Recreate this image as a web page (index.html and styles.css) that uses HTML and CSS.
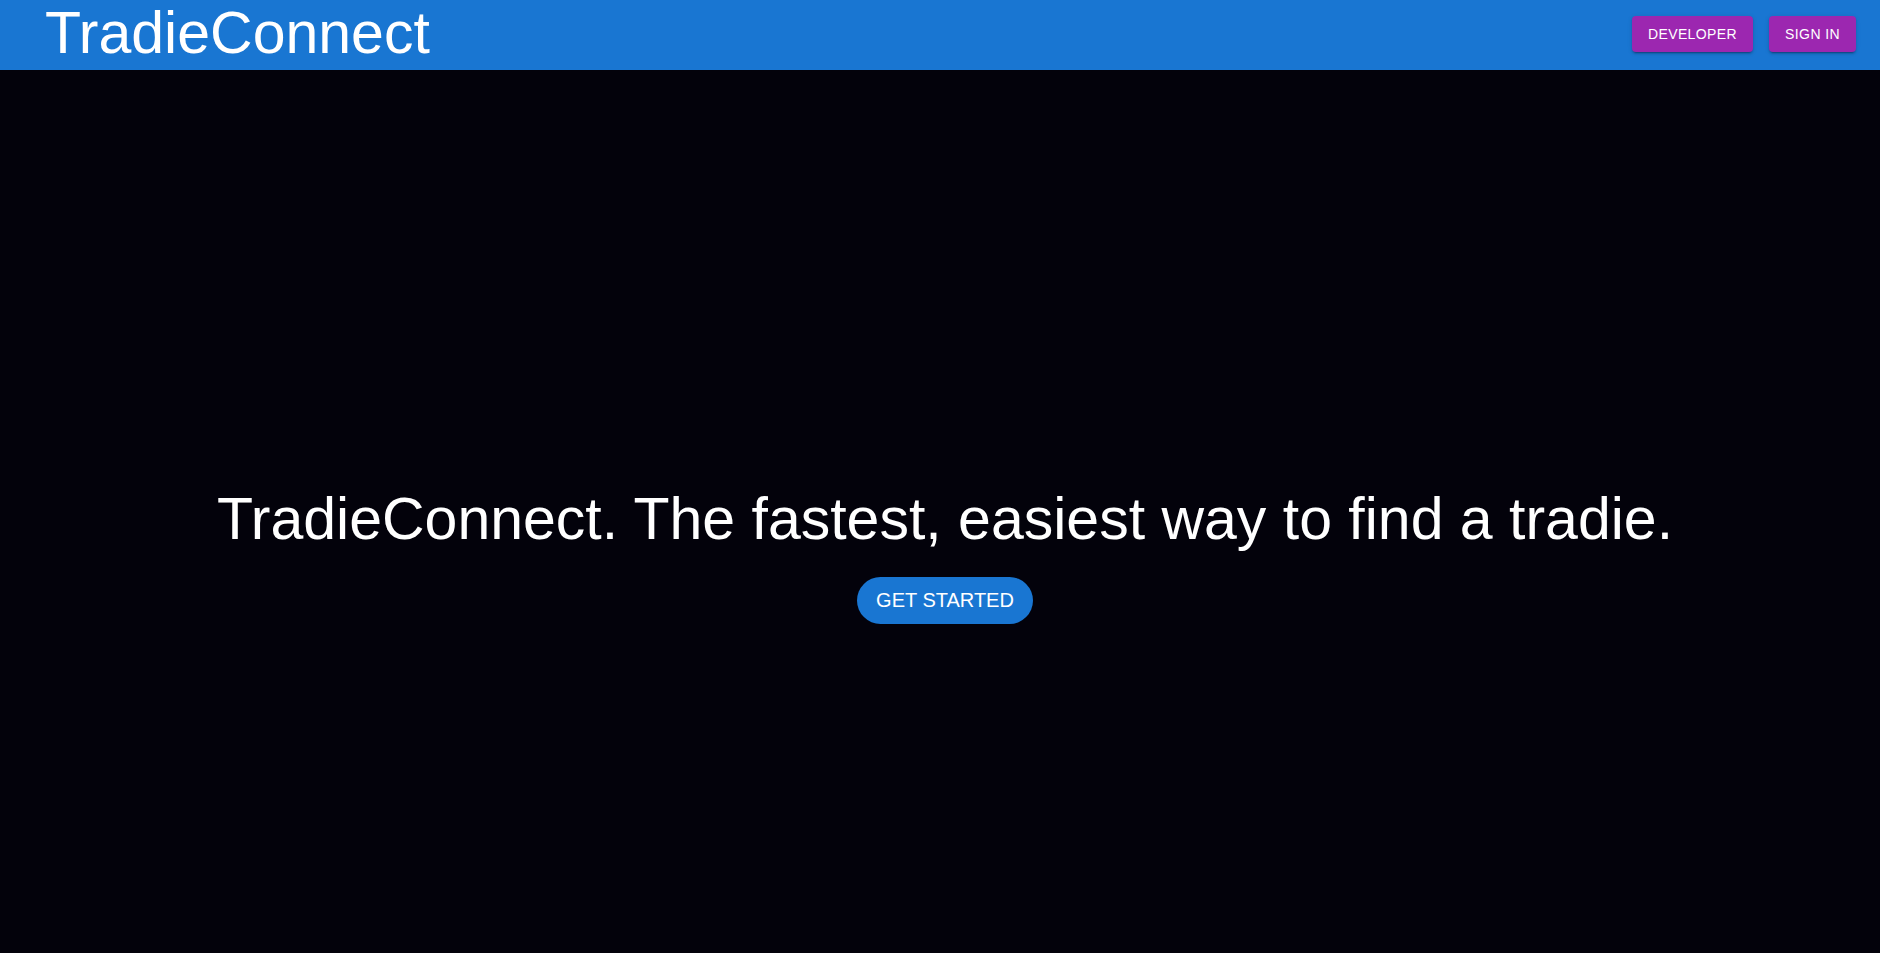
FILE: index.html
```html
<!DOCTYPE html>
<html lang="en">
<head>
<meta charset="utf-8">
<title>TradieConnect</title>
<link rel="stylesheet" href="styles.css">
</head>
<body>
<header class="appbar">
  <div class="logo">TradieConnect</div>
  <nav class="actions">
    <button class="btn-purple">Developer</button>
    <button class="btn-purple">Sign in</button>
  </nav>
</header>
<main class="hero">
  <h1 class="hero-title">TradieConnect. The fastest, easiest way to find a tradie.</h1>
  <button class="btn-start">Get started</button>
</main>
</body>
</html>
```
FILE: styles.css
```css
html, body {
  margin: 0;
  padding: 0;
  background: #03020b;
  overflow: hidden;
}
body {
  font-family: "Liberation Sans", Arial, sans-serif;
}
.appbar {
  height: 70px;
  background: #1976d2;
  display: flex;
  align-items: center;
  justify-content: space-between;
  padding: 0 24px 0 45px;
  box-sizing: border-box;
}
.logo {
  align-self: flex-start;
  color: #fff;
  font-size: 59px;
  line-height: 66px;
}
.actions {
  display: flex;
  gap: 16px;
  margin-top: -2px;
}
.btn-purple {
  background: #9c27b0;
  color: #fff;
  border: none;
  border-radius: 4px;
  font-family: "Liberation Sans", Arial, sans-serif;
  font-weight: 400;
  font-size: 14px;
  letter-spacing: 0.4px;
  text-transform: uppercase;
  padding: 0 16px;
  height: 36px;
  line-height: 36px;
  box-shadow: 0 3px 1px -2px rgba(0,0,0,0.2), 0 2px 2px 0 rgba(0,0,0,0.14), 0 1px 5px 0 rgba(0,0,0,0.12);
}
.hero {
  height: 883px;
  box-sizing: border-box;
  padding-top: 86px;
  padding-left: 10px;
  display: flex;
  flex-direction: column;
  align-items: center;
  justify-content: center;
}
.hero-title {
  margin: 0;
  color: #fff;
  font-weight: 400;
  font-size: 59px;
  line-height: 69px;
}
.btn-start {
  margin-top: 23px;
  background: #1976d2;
  color: #fff;
  border: none;
  border-radius: 24px;
  font-family: "Liberation Sans", Arial, sans-serif;
  font-size: 20px;
  line-height: 23px;
  padding: 12px 19px;
  text-transform: uppercase;
}
```
